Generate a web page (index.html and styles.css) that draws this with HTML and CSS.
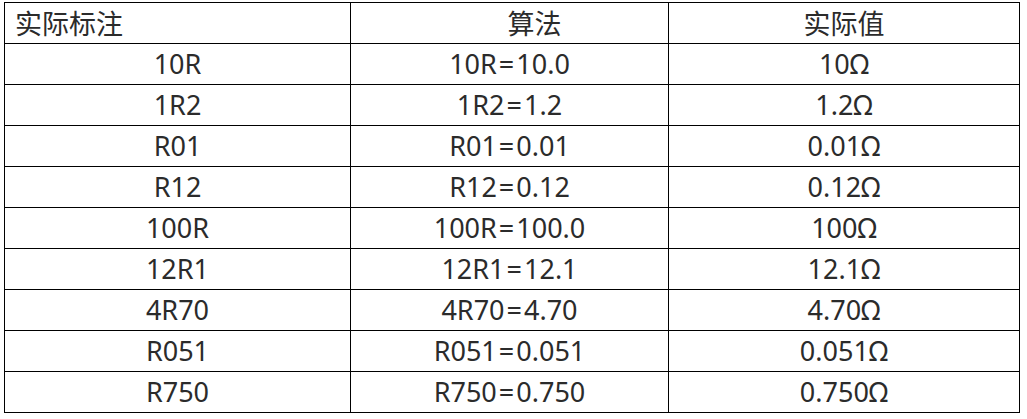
FILE: index.html
```html
<!DOCTYPE html>
<html>
<head>
<meta charset="utf-8">
<link rel="stylesheet" href="styles.css">
</head>
<body>
<table class="tbl">
  <colgroup>
    <col class="c1"><col class="c2"><col class="c3">
  </colgroup>
  <thead>
    <tr><th class="h-left">实际标注</th><th class="h-algo">算法</th><th>实际值</th></tr>
  </thead>
  <tbody>
    <tr><td>10R</td><td>10R<span class="eq">=</span>10.0</td><td>10Ω</td></tr>
    <tr><td>1R2</td><td>1R2<span class="eq">=</span>1.2</td><td>1.2Ω</td></tr>
    <tr><td>R01</td><td>R01<span class="eq">=</span>0.01</td><td>0.01Ω</td></tr>
    <tr><td>R12</td><td>R12<span class="eq">=</span>0.12</td><td>0.12Ω</td></tr>
    <tr><td>100R</td><td>100R<span class="eq">=</span>100.0</td><td>100Ω</td></tr>
    <tr><td>12R1</td><td>12R1<span class="eq">=</span>12.1</td><td>12.1Ω</td></tr>
    <tr><td>4R70</td><td>4R70<span class="eq">=</span>4.70</td><td>4.70Ω</td></tr>
    <tr><td>R051</td><td>R051<span class="eq">=</span>0.051</td><td>0.051Ω</td></tr>
    <tr><td>R750</td><td>R750<span class="eq">=</span>0.750</td><td>0.750Ω</td></tr>
  </tbody>
</table>
</body>
</html>
```
FILE: styles.css
```css
html, body {
  margin: 0;
  padding: 0;
  background: #ffffff;
}
body {
  padding: 2px 0 0 4px;
  font-family: "Noto Sans", "Noto Sans CJK SC", sans-serif;
  color: #2b2b2b;
}
.tbl {
  border-collapse: collapse;
  table-layout: fixed;
  width: 1015px;
  font-size: 27px;
}
.c1 { width: 346px; }
.c2 { width: 318px; }
.c3 { width: 351px; }
.tbl th, .tbl td {
  border: 1px solid #000;
  height: 40px;
  padding: 0;
  text-align: center;
  vertical-align: middle;
  font-weight: normal;
  line-height: 40px;
  white-space: nowrap;
}
.tbl th {
  font-family: "Noto Sans CJK SC", sans-serif;
}
.tbl th.h-left {
  text-align: left;
  padding-left: 10px;
}
.tbl th.h-algo {
  padding-left: 50px;
}
.eq {
  margin: 0 2px;
}
```
